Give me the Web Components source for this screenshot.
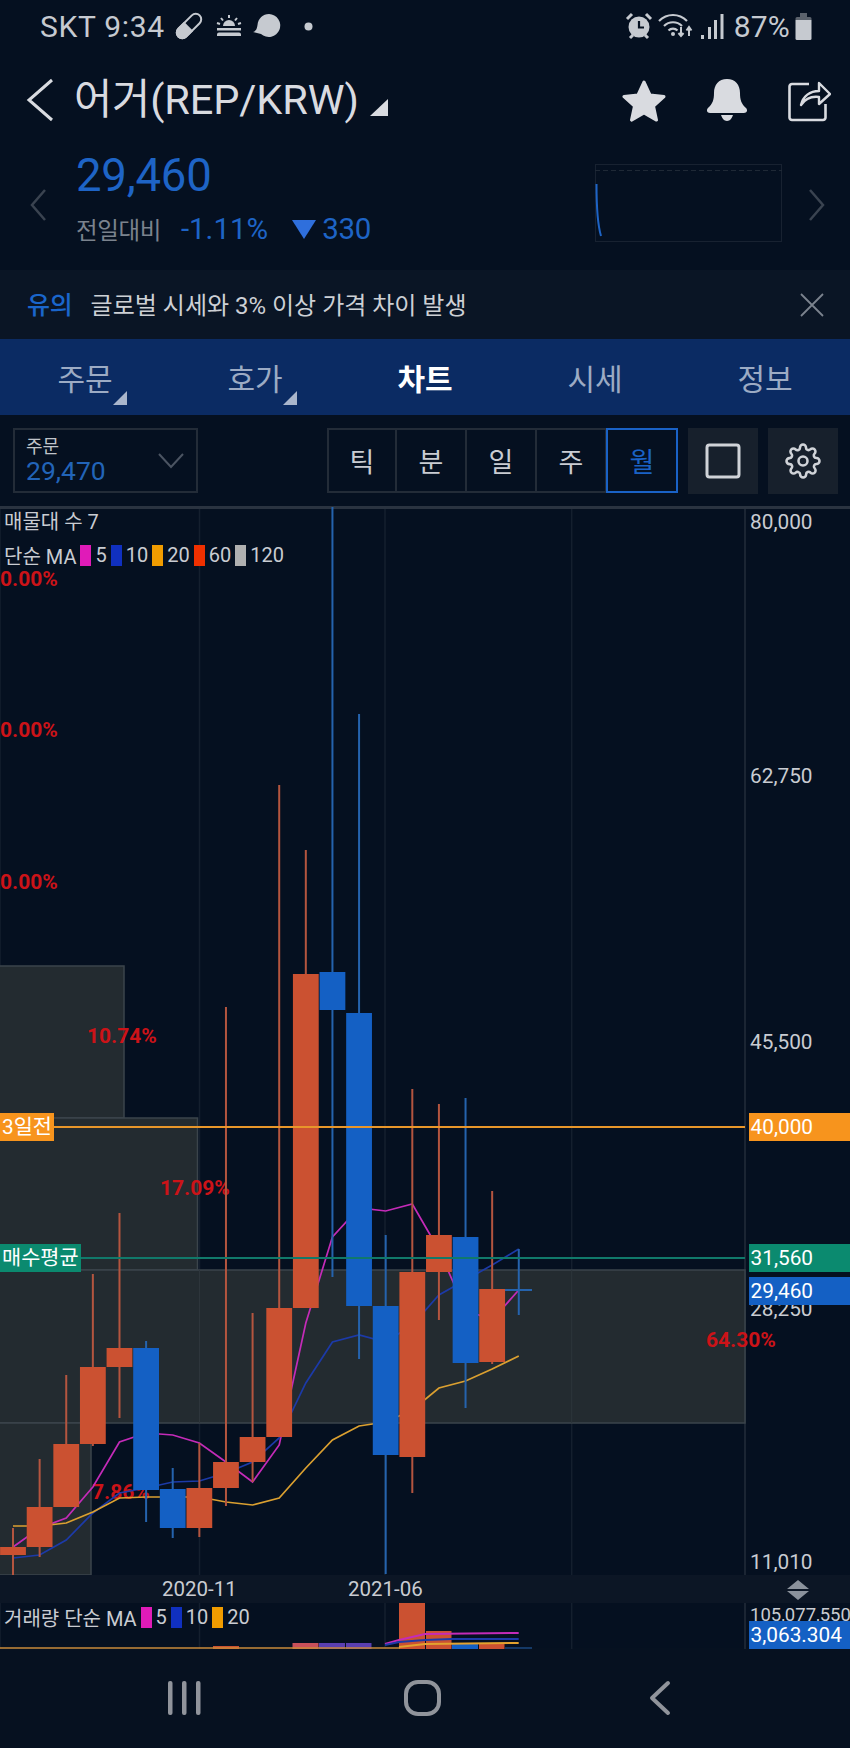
<!DOCTYPE html>
<html lang="ko">
<head>
<meta charset="utf-8">
<title>어거(REP/KRW)</title>
<style>
  html, body { margin: 0; padding: 0; background: #051020; }
  body { width: 850px; height: 1748px; overflow: hidden; font-family: Roboto, "Noto Sans CJK KR", sans-serif; }
</style>
</head>
<body>
<app-screen>
  <status-bar></status-bar>
  <coin-header name="어거(REP/KRW)"></coin-header>
  <price-summary price="29,460" rate="-1.11%" diff="330"></price-summary>
  <notice-bar tag="유의">글로벌 시세와 3% 이상 가격 차이 발생</notice-bar>
  <tab-bar></tab-bar>
  <chart-toolbar></chart-toolbar>
  <candle-chart></candle-chart>
  <nav-bar></nav-bar>
</app-screen>

<script>
(function () {
  const FONT = 'Roboto, "Noto Sans CJK KR", sans-serif';

  // small helper, every element is just a style + markup in an open shadow root
  function define(name, css, html, init) {
    const template = document.createElement('template');
    template.innerHTML = `<style>${css}</style>${html}`;
    customElements.define(name, class extends HTMLElement {
      constructor() {
        super();
        this.attachShadow({ mode: 'open' });
        this.shadowRoot.appendChild(template.content.cloneNode(true));
      }
      connectedCallback() {
        if (init) init(this.shadowRoot, this);
      }
    });
  }

  define('app-screen', `:host { display: flex; flex-direction: column; width: 850px; height: 1748px; }`, `<slot></slot>`);

  define('status-bar', `
    :host { display: flex; align-items: center; height: 52px; padding: 0 38px 0 40px; box-sizing: border-box;
      color: #c6cad0; font: 400 30px ${FONT}; letter-spacing: .7px; }
    svg { display: block; flex: none; }
    .spacer { flex: 1; }
  `, `
    <span>SKT 9:34</span>
    <svg width="28" height="28" viewBox="0 0 28 28" style="margin-left:10px">
      <g transform="rotate(-45 14 14)">
        <rect x="-1" y="8.500" width="30" height="11" rx="5.500" fill="none" stroke="#c6cad0" stroke-width="2"/>
        <path d="M4.500 7.500H13.500V20.500H4.500a6.500 6.500 0 0 1 0-13z" fill="#c6cad0"/>
      </g>
    </svg>
    <svg width="28" height="24" viewBox="0 0 28 24" style="margin-left:12px">
      <path d="M8 12a6 6 0 0 1 12 0z" fill="#c6cad0"/>
      <path d="M14 1v3M6 4l2 2.500M22 4l-2 2.500M2 9l3 1M26 9l-3 1" stroke="#c6cad0" stroke-width="2"/>
      <path d="M2 14h24v2.500H2zM4 18.500h20a2 2 0 0 1 2 2V22H2v-1.500a2 2 0 0 1 2-2z" fill="#c6cad0"/>
    </svg>
    <svg width="28" height="24" viewBox="0 0 28 24" style="margin-left:10px">
      <path d="M16 0a11.500 11.500 0 1 1-8 20L0 18c3-1 4-3 4.500-7C5 4.500 10 0 16 0z" fill="#c6cad0"/>
    </svg>
    <svg width="9" height="9" viewBox="0 0 9 9" style="margin-left:23px"><circle cx="4.500" cy="4.500" r="4" fill="#c6cad0"/></svg>
    <span class="spacer"></span>
    <svg width="28" height="28" viewBox="0 0 28 28">
      <circle cx="14" cy="15" r="10.500" fill="#c6cad0"/>
      <path d="M14 9v6.500h5" fill="none" stroke="#051020" stroke-width="2.200"/>
      <path d="M2 7l5-5M26 7l-5-5M5 26l3-3M23 26l-3-3" stroke="#c6cad0" stroke-width="3"/>
    </svg>
    <svg width="36" height="28" viewBox="0 0 36 28" style="margin-left:5px">
      <g fill="none" stroke="#c6cad0" stroke-width="2.200">
        <path d="M1 9c8-8 20-8 28 0"/><path d="M6 14c5-5 13-5 18 0"/><path d="M10.500 18.500c2.500-2.500 6.500-2.500 9 0"/>
      </g>
      <circle cx="15" cy="22" r="2" fill="#c6cad0"/>
      <path d="M23 15v8M20.500 21l2.500 3 2.500-3M31 24v-8M28.500 18.500L31 15l2.500 3.500" fill="none" stroke="#c6cad0" stroke-width="2"/>
    </svg>
    <svg width="24" height="26" viewBox="0 0 24 26" style="margin-left:6px">
      <rect x="1" y="22" width="3" height="4" fill="#c6cad0"/><rect x="8" y="14" width="3" height="12" fill="#c6cad0"/>
      <rect x="14" y="7" width="3" height="19" fill="#c6cad0"/><rect x="20.500" y="1" width="3" height="25" fill="#c6cad0"/>
    </svg>
    <span style="margin-left:10px;letter-spacing:.2px">87%</span>
    <svg width="17" height="27" viewBox="0 0 17 27" style="margin-left:5px">
      <path d="M5 0h7v4H5z" fill="#5b626c"/><path d="M2 4h13a1.500 1.500 0 0 1 1.500 1.500V7H.5V5.500A1.500 1.500 0 0 1 2 4z" fill="#5b626c"/>
      <path d="M.5 7h16v18.500A1.500 1.500 0 0 1 15 27H2a1.500 1.500 0 0 1-1.500-1.500z" fill="#c6cad0"/>
    </svg>
  `);

  define('coin-header', `
    :host { display: flex; align-items: center; height: 96px; box-sizing: border-box; padding: 0 0 0 26px; color: #d9dbe0; }
    svg { display: block; flex: none; }
    .name { font: 400 41.500px/1 ${FONT}; margin-left: 20px; white-space: nowrap; letter-spacing: -.1px; }
    .spacer { flex: 1; }
  `, `
    <svg width="28" height="44" viewBox="0 0 28 44"><path d="M26 2L3 22l23 20" fill="none" stroke="#d9dbe0" stroke-width="3"/></svg>
    <span class="name"></span>
    <svg width="18" height="18" viewBox="0 0 18 18" style="margin:16px 0 0 11px"><path d="M18 0v17H0z" fill="#d9dbe0"/></svg>
    <span class="spacer"></span>
    <svg width="46" height="44" viewBox="0 0 46 44"><path d="M23 4l6 13 14 1.600-10.500 9.500 3 14L23 35l-12.500 7.100 3-14L3 18.600 17 17z" fill="#d9dbe0" stroke="#d9dbe0" stroke-width="3" stroke-linejoin="round"/></svg>
    <svg width="44" height="44" viewBox="0 0 44 44" style="margin-left:38px"><path d="M22 1c8.500 0 13 6 13 14 0 7 1.500 11 6 15 2 2 1 5-2 5H5c-3 0-4-3-2-5 4.500-4 6-8 6-15C9 7 13.500 1 22 1zM16 37h12c-1 3-3 6-6 6s-5-3-6-6z" fill="#d9dbe0"/></svg>
    <svg width="44" height="44" viewBox="0 0 44 44" style="margin:0 19px 0 38px">
      <path d="M22 6H5a2.500 2.500 0 0 0-2.500 2.500v31A2.500 2.500 0 0 0 5 42h31a2.500 2.500 0 0 0 2.500-2.500V26" fill="none" stroke="#d9dbe0" stroke-width="2.600"/>
      <path d="M14 27c2-9 9-14 18-14V5l11 11-11 10v-7c-8-1-14 2-18 8z" fill="#051020" stroke="#d9dbe0" stroke-width="2.400" stroke-linejoin="round"/>
    </svg>
  `, (root, host) => {
    root.querySelector('.name').textContent = host.getAttribute('name');
  });

  define('price-summary', `
    :host { display: flex; height: 122px; box-sizing: border-box; align-items: flex-start; padding: 0 0 0 30px; font-family: ${FONT}; }
    svg { display: block; flex: none; }
    .main { margin-left: 30px; }
    .price { display: block; font: 400 45.500px/46px ${FONT}; color: #1e64c6; margin-top: 5px; letter-spacing: -.2px; }
    .row { display: flex; align-items: center; margin-top: 13px; height: 34px; }
    .lbl { font-size: 23.500px; color: #7b838e; letter-spacing: -.4px; }
    .num { font-size: 29.500px; color: #1e64c6; }
    .diff { letter-spacing: -.3px; }
    .tri { width: 0; height: 0; border-left: 12.500px solid transparent; border-right: 12.500px solid transparent; border-top: 19px solid #2f6fdc; margin: 0 6px 0 24px; }
    .spacer { flex: 1; }
    .spark { width: 187px; height: 78px; box-sizing: border-box; margin-top: 16px; border: 1px solid #182231; position: relative; }
    .spark svg { position: absolute; left: -1px; top: -1px; }
  `, `
    <svg width="16" height="32" viewBox="0 0 16 32" style="margin-top:41px"><path d="M15 1L2 16l13 15" fill="none" stroke="#3a4350" stroke-width="2.500"/></svg>
    <div class="main">
      <span class="price"></span>
      <div class="row"><span class="lbl">전일대비</span><span class="num rate" style="margin-left:20px"></span><span class="tri"></span><span class="num diff"></span></div>
    </div>
    <span class="spacer"></span>
    <div class="spark">
      <svg width="187" height="78" viewBox="0 0 187 78">
        <path d="M0 6.500H187" stroke="#1f2936" stroke-dasharray="5 3" fill="none"/>
        <path d="M1.500 20c0 25 1.500 42 4.500 52" stroke="#1e64c6" stroke-width="2" fill="none"/>
      </svg>
    </div>
    <svg width="16" height="32" viewBox="0 0 16 32" style="margin:41px 25px 0 27px"><path d="M1 1l13 15L1 31" fill="none" stroke="#3a4350" stroke-width="2.500"/></svg>
  `, (root, host) => {
    root.querySelector('.price').textContent = host.getAttribute('price');
    root.querySelector('.rate').textContent = host.getAttribute('rate');
    root.querySelector('.diff').textContent = host.getAttribute('diff');
  });

  define('notice-bar', `
    :host { display: flex; align-items: center; height: 69px; box-sizing: border-box; padding: 0 26px 3px 27px; background: #0a1525; color: #cdd0d5; font: 400 24px ${FONT}; }
    .tag { color: #1a66cc; font-weight: 500; font-size: 25px; margin-right: 18px; letter-spacing: -.2px; }
    .msg { flex: 1; }
    svg { display: block; }
  `, `
    <span class="tag"></span><span class="msg"><slot></slot></span>
    <svg width="24" height="24" viewBox="0 0 24 24" style="margin-top:3px"><path d="M1 1l22 22M23 1L1 23" stroke="#7b838e" stroke-width="1.800"/></svg>
  `, (root, host) => {
    root.querySelector('.tag').textContent = host.getAttribute('tag');
  });

  define('tab-item', `
    :host { display: flex; position: relative; flex: 1; align-items: center; justify-content: center;
      color: #9cabc4; font: 400 30px ${FONT}; padding-bottom: 1px; }
    :host([active]) { color: #fff; font-weight: 700; }
    .tri { display: none; position: absolute; left: 113px; top: 52px; width: 14px; height: 14px; background: #aab6cc; clip-path: polygon(100% 0, 100% 100%, 0 100%); }
    :host([menu]) .tri { display: block; }
  `, `<slot></slot><span class="tri"></span>`);

  define('tab-bar', `
    :host { display: flex; height: 76px; background: #0b2b63; }
  `, `
    <tab-item menu>주문</tab-item><tab-item menu>호가</tab-item><tab-item active>차트</tab-item><tab-item>시세</tab-item><tab-item>정보</tab-item>
  `);

  define('chart-toolbar', `
    :host { display: flex; align-items: flex-start; height: 91px; padding: 13px 0 0 13px; box-sizing: border-box; font-family: ${FONT}; }
    .pick { display: flex; align-items: center; justify-content: space-between; width: 185px; height: 65px; box-sizing: border-box;
      border: 2px solid #232c38; padding: 0 12px 0 11px; }
    .pick b { display: block; font: 400 18px/22px ${FONT}; color: #c0c4ca; }
    .pick i { display: block; font: 400 26.500px/26px ${FONT}; font-style: normal; color: #2264b8; margin-bottom: 2px; }
    .seg { display: flex; margin-left: 129px; height: 65px; }
    .seg span { display: flex; align-items: center; justify-content: center; width: 70px; box-sizing: border-box;
      border: 2px solid #232c38; border-left-width: 0; font-size: 27px; color: #c9ccd2; }
    .seg span:first-child { border-left-width: 2px; }
    .seg .on { border: 2.500px solid #1a62c6; color: #1a62c6; margin-left: -1px; width: 72px; }
    .btn { display: flex; align-items: center; justify-content: center; width: 70px; height: 66px; background: #17202c; margin-left: 11px; }
    .btn + .btn { margin-left: 10px; }
    svg { display: block; }
  `, `
    <div class="pick"><div><b>주문</b><i>29,470</i></div>
      <svg width="26" height="16" viewBox="0 0 26 16"><path d="M1 1l12 13L25 1" fill="none" stroke="#4b5462" stroke-width="2"/></svg></div>
    <div class="seg"><span>틱</span><span>분</span><span>일</span><span>주</span><span class="on">월</span></div>
    <div class="btn" style="margin-left:10px"><svg width="36" height="36" viewBox="0 0 36 36"><rect x="2" y="2" width="32" height="32" rx="2.500" fill="none" stroke="#d0d3d8" stroke-width="3"/></svg></div>
    <div class="btn"><svg width="36" height="36" viewBox="0 0 24 24" fill="none" stroke="#d0d3d8" stroke-width="1.700"><circle cx="12" cy="12" r="3"/><path d="M19.400 15a1.650 1.650 0 0 0 .33 1.820l.06.06a2 2 0 0 1 0 2.830 2 2 0 0 1-2.830 0l-.06-.06a1.650 1.650 0 0 0-1.820-.33 1.650 1.650 0 0 0-1 1.510V21a2 2 0 0 1-2 2 2 2 0 0 1-2-2v-.09A1.650 1.650 0 0 0 9 19.400a1.650 1.650 0 0 0-1.820.33l-.06.06a2 2 0 0 1-2.830 0 2 2 0 0 1 0-2.830l.06-.06a1.650 1.650 0 0 0 .33-1.820 1.650 1.650 0 0 0-1.510-1H3a2 2 0 0 1-2-2 2 2 0 0 1 2-2h.09A1.650 1.650 0 0 0 4.600 9a1.650 1.650 0 0 0-.33-1.820l-.06-.06a2 2 0 0 1 0-2.830 2 2 0 0 1 2.830 0l.06.06a1.650 1.650 0 0 0 1.820.33H9a1.650 1.650 0 0 0 1-1.510V3a2 2 0 0 1 2-2 2 2 0 0 1 2 2v.09a1.650 1.650 0 0 0 1 1.510 1.650 1.650 0 0 0 1.820-.33l.06-.06a2 2 0 0 1 2.830 0 2 2 0 0 1 0 2.830l-.06.06a1.650 1.650 0 0 0-.33 1.820V9a1.650 1.650 0 0 0 1.510 1H21a2 2 0 0 1 2 2 2 2 0 0 1-2 2h-.09a1.650 1.650 0 0 0-1.510 1z"/></svg></div>
  `);

  // chart data is in page pixels, the canvas starts at y = TOP
  const TOP = 506;
  const RED = '#cb5131', BLUE = '#1460c4';
  const RED_WICK = '#b4553f', BLUE_WICK = '#2563ad';
  // [body top, body bottom, wick top, wick bottom, colour]
  const CANDLES = [
    [1547, 1555, 1528, 1575, 'r'], [1507, 1547, 1459, 1557, 'r'], [1444, 1507, 1375, 1507, 'r'],
    [1367, 1444, 1274, 1446, 'r'], [1348, 1367, 1213, 1418, 'r'], [1348, 1490, 1341, 1522, 'b'],
    [1489, 1528, 1468, 1538, 'b'], [1488, 1528, 1443, 1537, 'r'], [1462, 1488, 1007, 1506, 'r'],
    [1437, 1462, 1313, 1482, 'r'], [1308, 1437, 785, 1437, 'r'], [974, 1308, 850, 1308, 'r'],
    [972, 1010, 507, 1277, 'b'], [1013, 1306, 714, 1359, 'b'], [1306, 1455, 1235, 1574, 'b'],
    [1272, 1457, 1089, 1493, 'r'], [1235, 1272, 1104, 1320, 'r'], [1237, 1363, 1098, 1408, 'b'],
    [1289, 1362, 1191, 1364, 'r']
  ];
  const cx = i => 13 + 26.62 * i;
  const MA = [
    ['#c42bb8', [1547, 1528, 1518, 1487, 1442, 1433, 1435, 1443, 1462, 1482, 1445, 1323, 1237, 1208, 1211, 1204, 1250, 1310, 1320, 1290]],
    ['#1c3aa8', [1558, 1555, 1540, 1513, 1493, 1488, 1482, 1481, 1473, 1462, 1438, 1383, 1342, 1335, 1342, 1325, 1295, 1280, 1265, 1249]],
    ['#dba030', [1526, 1526, 1523, 1512, 1498, 1497, 1497, 1497, 1502, 1505, 1498, 1468, 1440, 1426, 1422, 1410, 1388, 1381, 1369, 1356]]
  ];
  const REGIONS = [[0, 966, 124, 1118], [0, 1118, 197.5, 1270], [0, 1270, 745, 1423], [0, 1423, 91, 1575]];
  // [x, centre y, text]
  const PERCENTS = [
    [0, 579, '0.00%'], [0, 730, '0.00%'], [0, 882, '0.00%'], [87, 1036, '10.74%'],
    [160, 1188, '17.09%'], [92, 1492, '7.86%'], [706, 1340, '64.30%']
  ];
  const AXIS = [[522, '80,000'], [776, '62,750'], [1042, '45,500'], [1309, '28,250'], [1562, '11,010'], [1615, '105,077,550', 18.5]];
  const TAGS = [
    [748.5, 1113, '#f7941d', '40,000'], [748.5, 1244, '#0b8a6f', '31,560'],
    [748.5, 1277, '#1460c4', '29,460'], [748.5, 1621, '#1460c4', '3,063.304'],
    [0, 1113, '#f7941d', '3일전'], [0, 1244, '#0b8a6f', '매수평균']
  ];

  function candles() {
    let s = '';
    CANDLES.forEach((c, i) => {
      const x = cx(i), red = c[4] === 'r';
      s += `<rect x="${x - 1}" y="${c[2]}" width="2" height="${c[3] - c[2]}" fill="${red ? RED_WICK : BLUE_WICK}"/>`;
      s += `<rect x="${x - 12.9}" y="${c[0]}" width="25.8" height="${c[1] - c[0]}" fill="${red ? RED : BLUE}"/>`;
    });
    // the running month has no body yet
    s += `<rect x="${cx(19) - 1}" y="1249" width="2" height="66" fill="${BLUE_WICK}"/><rect x="505" y="1289" width="27" height="2" fill="${BLUE_WICK}"/>`;
    return s;
  }

  define('candle-chart', `
    :host { display: block; position: relative; width: 850px; height: 1143px; overflow: hidden; font-family: ${FONT}; }
    svg { position: absolute; left: 0; top: 0; display: block; }
    .t { position: absolute; white-space: nowrap; line-height: 28px; height: 28px; margin-top: -14px; font-size: 20px; color: #c9ccd2; }
    .ax { font-size: 20.800px; }
    .date { font-size: 20.500px; }
    .pct { font-weight: 700; font-size: 21px; color: #cc1318; }
    .tag { margin-top: 0; color: #fff; padding: 0 2px; box-sizing: border-box; font-size: 20.800px; }
    .tag.r { width: 101.500px; }
    .key { display: flex; position: absolute; left: 4px; align-items: center; height: 22px; font-size: 20px; color: #c9ccd2; white-space: nowrap; }
    .key i { display: block; width: 11px; height: 21px; margin: 0 4px 0 4px; }
    .arrows { position: absolute; left: 787px; top: 1074px; }
  `, `
    <svg class="back" width="850" height="1143" viewBox="0 ${TOP} 850 1143"></svg>
    <div class="pcts"></div>
    <svg class="front" width="850" height="1143" viewBox="0 ${TOP} 850 1143"></svg>
    <div class="labels"></div>
    <svg class="arrows" width="22" height="20" viewBox="0 0 22 20"><path d="M11 0l11 9H0zM0 11h22L11 20z" fill="#8b929c"/></svg>
  `, (root) => {
    let back = `<rect x="0" y="${TOP}" width="850" height="3" fill="#2a3340"/>`;
    [0, 199.5, 385, 571.7].forEach(x => { back += `<path d="M${x} 509V1649" stroke="#141f2e" stroke-width="1.500"/>`; });
    back += `<path d="M745 509V1649" stroke="#232d3a" stroke-width="1.500"/>`;
    REGIONS.forEach(r => {
      back += `<rect x="${r[0] - 2}" y="${r[1]}" width="${r[2] - r[0] + 2}" height="${r[3] - r[1]}" fill="#232b30" stroke="#3b444b" stroke-width="1.500"/>`;
    });
    back += `<path d="M199.500 1270V1423M571.700 1270V1423" stroke="#2d353b" stroke-width="1"/>`;
    root.querySelector('.back').innerHTML = back;

    let front = '';
    MA.forEach(m => {
      front += `<polyline fill="none" stroke="${m[0]}" stroke-width="1.700" points="${m[1].map((y, i) => cx(i) + ',' + y).join(' ')}"/>`;
    });
    front += candles();
    // price lines and the bar under the main pane
    front += `<rect x="0" y="1126" width="745" height="2" fill="#e8962a"/><rect x="0" y="1257" width="745" height="2" fill="#10796a"/>`;
    front += `<rect x="0" y="1575" width="850" height="28" fill="#0c1625"/>`;
    // volume pane
    [[399, 425, 1603, RED], [426, 451.5, 1631, RED], [452, 478, 1644, BLUE], [479, 504.500, 1644, RED],
     [292.500, 318.500, 1643, '#c9505a'], [319, 345, 1643, '#5b3fb0'], [346, 371.500, 1643, '#5b3fb0'], [213, 239, 1646, RED]].forEach(v => {
      front += `<rect x="${v[0]}" y="${v[2]}" width="${v[1] - v[0]}" height="${1649 - v[2]}" fill="${v[3]}"/>`;
    });
    front += `<path d="M0 1648H400" stroke="#c98a3a" stroke-width="1.500"/><path d="M505 1648H532" stroke="#2563ad" stroke-width="1"/>`;
    front += `<path d="M385 1644L399 1640L425 1634L518.700 1633" fill="none" stroke="#c42bb8" stroke-width="2"/>`;
    front += `<path d="M385 1645L399 1642L425 1640L452 1639L518.700 1639" fill="none" stroke="#1c3aa8" stroke-width="2"/>`;
    front += `<path d="M399 1647L425 1644L518.700 1643" fill="none" stroke="#e2a22e" stroke-width="2"/>`;
    root.querySelector('.front').innerHTML = front;

    const text = (cls, x, y, str, extra) => `<span class="t ${cls}" style="left:${x}px;top:${y - TOP}px;${extra || ''}">${str}</span>`;
    root.querySelector('.pcts').innerHTML = PERCENTS.map(p => text('pct', p[0], p[1], p[2])).join('');

    let labels = AXIS.map(a => text('ax', 750, a[0], a[1], a[2] ? `font-size:${a[2]}px` : '')).join('');
    labels += TAGS.map(g => `<span class="t tag ${g[0] ? 'r' : ''}" style="left:${g[0]}px;top:${g[1] - TOP}px;background:${g[2]}">${g[3]}</span>`).join('');
    labels += text('date', 162, 1589, '2020-11') + text('date', 348, 1589, '2021-06');
    const key = (top, name, items) => `<div class="key" style="top:${top - TOP}px"><span>${name}</span>` +
      items.map(k => `<i style="background:${k[0]}"></i><span>${k[1]}</span>`).join('') + `</div>`;
    labels += `<span class="t" style="left:4px;top:${522 - TOP}px">매물대 수 7</span>`;
    labels += key(544, '단순 MA', [['#e01bb8', 5], ['#1030c0', 10], ['#f09c00', 20], ['#f03000', 60], ['#b0b0b0', 120]]);
    labels += key(1606, '거래량 단순 MA', [['#e01bb8', 5], ['#1030c0', 10], ['#f09c00', 20]]);
    root.querySelector('.labels').innerHTML = labels;
  });

  define('nav-bar', `
    :host { display: flex; height: 99px; align-items: center; box-sizing: border-box; padding: 0 0 0 168px; margin-top: -1px; background: #061120; }
    svg { display: block; }
  `, `
    <svg width="33" height="36" viewBox="0 0 33 36"><g fill="#90949b"><rect x="0" y="1" width="4.500" height="34" rx="2"/><rect x="14" y="1" width="4.500" height="34" rx="2"/><rect x="28" y="1" width="4.500" height="34" rx="2"/></g></svg>
    <svg width="37" height="36" viewBox="0 0 37 36" style="margin-left:203px"><rect x="2" y="2" width="33" height="32" rx="12" fill="none" stroke="#90949b" stroke-width="4"/></svg>
    <svg width="22" height="36" viewBox="0 0 22 36" style="margin-left:208px"><path d="M19 3L3 18l16 15" fill="none" stroke="#90949b" stroke-width="4" stroke-linecap="round" stroke-linejoin="round"/></svg>
  `);
})();
</script>
</body>
</html>
